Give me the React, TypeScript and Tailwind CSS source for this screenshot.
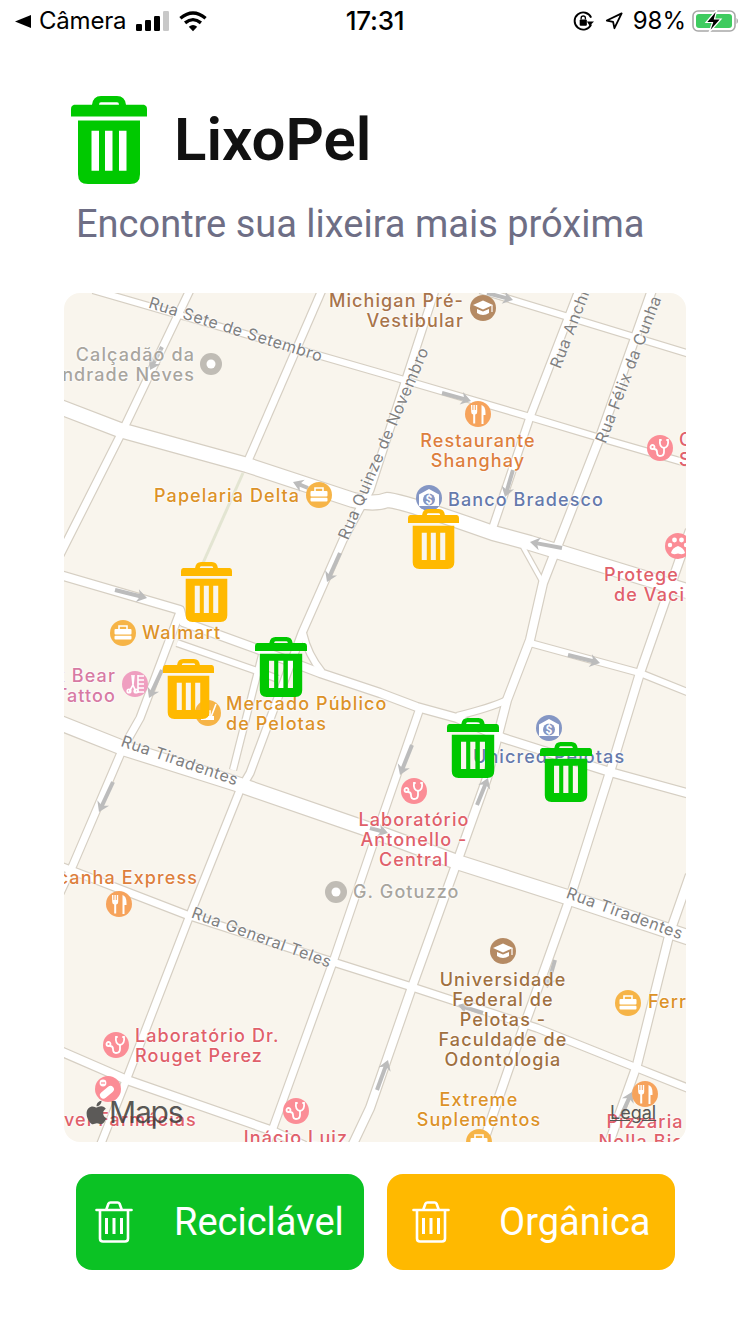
import React from "react";
import { FaApple } from "react-icons/fa";

const ROADS: { d: string; w: number }[] = [
  { d: "M93 290 L380 373 L530 417 L600 438 L690 464", w: 6 },
  { d: "M480 290 L690 354", w: 6 },
  { d: "M60 575 L180 610 L183 622 L260 650 L320 673 L380 693 L417 707 L457 718 L503 738 L610 772 L690 794", w: 8 },
  { d: "M177 643 L260 672 L278 679", w: 6 },
  { d: "M530 643 L640 673 L690 693", w: 6 },
  { d: "M60 1051 L127 1080 L270 1130 L305 1146", w: 8 },
  { d: "M60 866 L187 915 L333 962 L412 987 L537 1028 L637 1068 L690 1089", w: 7 },
  { d: "M190 290 L123 430 L60 555", w: 7 },
  { d: "M322 290 L247 463", w: 7 },
  { d: "M180 612 L140 718 L123 748 L73 865 L60 893", w: 7 },
  { d: "M435 290 L370 490 L343 540 L302 633 L250 773 L240 790 L190 915 L127 1078 L100 1146", w: 7 },
  { d: "M262 655 L233 770", w: 6 },
  { d: "M303 633 Q308 655 322 672", w: 6 },
  { d: "M579 290 L530 417 L493 527", w: 7 },
  { d: "M652 290 L600 437 L543 583 L530 640 L507 700 L487 778 L457 862 L412 987 L370 1108 L352 1146", w: 8 },
  { d: "M507 700 Q490 708 457 716", w: 6 },
  { d: "M523 547 L543 583", w: 4 },
  { d: "M690 530 L640 673 L610 772 L570 898 L540 982 L510 1065 L482 1146", w: 8 },
  { d: "M690 875 L670 932 L637 1065 L608 1146", w: 8 },
  { d: "M420 708 L383 815 L333 962 L273 1128 L266 1146", w: 7 },
  { d: "M60 407 L120 430 L247 465 L353 500 Q375 505 387 500 Q400 500 493 533 L530 543 L690 592", w: 14 },
  { d: "M60 723 L123 748 L240 785 L376 832 L457 862 L570 898 L690 938", w: 14 },
];

const ARROWS: number[][] = [
  [442, 393, 471, 401], [115, 590, 147, 598], [308, 488, 293, 482], [340, 553, 327, 582],
  [162, 347, 150, 370], [162, 670, 149, 698], [513, 470, 505, 497], [562, 548, 530, 542],
  [568, 655, 600, 663], [487, 293, 513, 300], [113, 782, 99, 812], [412, 745, 400, 775],
  [477, 805, 488, 778], [370, 828, 388, 833], [483, 1013, 458, 1005], [555, 960, 547, 988],
  [377, 1090, 388, 1060], [620, 1118, 632, 1092],
];

function Arrow({ a }: { a: number[] }) {
  const [x1, y1, x2, y2] = a;
  const ang = (Math.atan2(y2 - y1, x2 - x1) * 180) / Math.PI;
  const len = Math.hypot(x2 - x1, y2 - y1);
  return (
    <g transform={`translate(${x1} ${y1}) rotate(${ang})`} fill="#bcbcbc">
      <rect x={0} y={-2} width={len - 6} height={4} />
      <path d={`M${len} 0 L${len - 10} -6.5 L${len - 7} 0 L${len - 10} 6.5 Z`} />
    </g>
  );
}

function Glyph({ kind }: { kind: string }) {
  if (kind === "bag")
    return (
      <g fill="#fff">
        <path d="M-4 -4 V-7 H4 V-4" fill="none" stroke="#fff" strokeWidth="1.6" />
        <rect x="-8.5" y="-4" width="17" height="5.5" rx="1" />
        <rect x="-8.5" y="2.8" width="17" height="3.8" rx="1" />
      </g>
    );
  if (kind === "cart")
    return (
      <g fill="none" stroke="#fff" strokeWidth="1.6">
        <path d="M8 -9 L3 4" />
        <path d="M-7 3 H6 V7 H-7 Z" fill="#fff" stroke="none" />
        <path d="M-2 3 V-2 H2 V3" />
      </g>
    );
  if (kind === "fork")
    return (
      <g fill="#fff">
        <path d="M-7 -9 h1.4 v5 h1 v-5 h1.4 v5 h1 v-5 h1.4 v7 q0 2 -2 2.6 v9 h-2 v-9 q-2 -.6 -2 -2.6 Z" />
        <path d="M3.5 -9 q4 1 4 8 v2 h-2 v9 h-2 Z" />
      </g>
    );
  if (kind === "cap")
    return (
      <g fill="#fff">
        <path d="M-10 -3 L0 -7.5 L10 -3 L0 1.5 Z" />
        <path d="M-6 1 V5 Q0 9 6 5 V1 L0 3.6 Z" />
        <rect x="8.4" y="-3" width="1.2" height="7" />
      </g>
    );
  if (kind === "bank")
    return (
      <g>
        <path d="M0 -9 L10 -3.5 V8 H-10 V-3.5 Z" fill="#fff" />
        <circle r="6" cy="1.5" fill="#8496c4" />
        <text y="6" textAnchor="middle" fontSize="12" fontWeight="700" fill="#fff" fontFamily="Roboto, sans-serif">$</text>
      </g>
    );
  if (kind === "steth")
    return (
      <g fill="none" stroke="#fff" strokeWidth="1.8" strokeLinecap="round">
        <path d="M2 -8 L1 -8 Q0 -1 5 0 Q10 -1 9 -8 L8 -8" transform="translate(-1 0)" />
        <path d="M4 0 V4 Q4 8 0 8 Q-3 8 -3 4 Q-3 1 -6 1" />
        <circle cx="-7.5" cy="-1" r="2" />
      </g>
    );
  if (kind === "paw")
    return (
      <g fill="#fff">
        <path d="M0 0 Q6 2 7 7 Q5 9 0 7.5 Q-5 9 -7 7 Q-6 2 0 0 Z" />
        <circle cx="-8" cy="-1" r="2.2" />
        <circle cx="-3.5" cy="-6" r="2.4" />
        <circle cx="3.5" cy="-6" r="2.4" />
        <circle cx="8" cy="-1" r="2.2" />
      </g>
    );
  if (kind === "comb")
    return (
      <g fill="none" stroke="#fff" strokeWidth="1.6">
        <path d="M3 -9 V9 M3 -8 H9 M3 -4 H9 M3 0 H9 M3 4 H9 M3 8 H9" />
        <path d="M-1 -9 L-2 1 L-6 8 M-3 -9 L-2 1 L1 8" />
        <circle cx="-6" cy="7" r="1.8" />
        <circle cx="1" cy="7" r="1.8" />
      </g>
    );
  if (kind === "pill")
    return (
      <g fill="#fff">
        <rect x="-9" y="-1" width="16" height="7" rx="3.5" transform="rotate(-40 0 3)" />
        <circle cx="-5" cy="-6" r="3.4" />
        <rect x="-7" y="-6.6" width="4" height="1.2" fill="#fb8d96" />
      </g>
    );
  return null;
}

const POIS: [number, number, string, string][] = [
  [483, 308, "#b58a63", "cap"], [478, 414, "#f6a35c", "fork"], [319, 495, "#f6b447", "bag"],
  [429, 498, "#8496c4", "bank"], [660, 448, "#fb8d96", "steth"], [678, 546, "#fb8d96", "paw"],
  [123, 633, "#f6b447", "bag"], [135, 684, "#ef9fc0", "comb"], [208, 713, "#f6b447", "cart"],
  [549, 728, "#8496c4", "bank"], [414, 791, "#fb8d96", "steth"], [119, 904, "#f6a35c", "fork"],
  [503, 951, "#b58a63", "cap"], [628, 1003, "#f6b447", "bag"], [116, 1045, "#fb8d96", "steth"],
  [108, 1089, "#fb8d96", "pill"], [296, 1111, "#fb8d96", "steth"], [645, 1094, "#f6a35c", "fork"],
  [479, 1142, "#f6b447", "bag"],
];

function MapDrawing() {
  return (
    <svg viewBox="64 293 622 849" className="absolute inset-0 w-full h-full">
      {ROADS.map((r, i) => (
        <path key={i} d={r.d} fill="none" stroke="#d6cfc3" strokeWidth={r.w + 2.4} strokeLinejoin="round" />
      ))}
      <path d="M243 473 L203 563" fill="none" stroke="#e3e5d2" strokeWidth="3" />
      {ROADS.map((r, i) => (
        <path key={i} d={r.d} fill="none" stroke="#ffffff" strokeWidth={r.w} strokeLinejoin="round" />
      ))}
      {ARROWS.map((a, i) => (
        <Arrow key={i} a={a} />
      ))}
      {[[211, 364], [336, 892]].map(([x, y]) => (
        <g key={x}>
          <circle cx={x} cy={y} r={11} fill="#c0bcb5" />
          <circle cx={x} cy={y} r={4.5} fill="#ffffff" />
        </g>
      ))}
      {POIS.map(([x, y, c, k], i) => (
        <g key={i} transform={`translate(${x} ${y})`}>
          <circle r={13} fill={c} />
          <Glyph kind={k} />
        </g>
      ))}
    </svg>
  );
}

function TrashSolid({ className }: { className: string }) {
  return (
    <svg viewBox="0 0 152 180" preserveAspectRatio="none" className={className} fill="currentColor">
      <path
        fillRule="evenodd"
        d="M60 0 H92 Q108 0 110 18 H146 Q152 20 152 27 V42 H0 V27 Q0 20 6 18 H42 Q44 0 60 0 Z M60 13 Q56 13 56 18 H96 Q96 13 92 13 Z"
      />
      <path
        fillRule="evenodd"
        d="M14 50 H138 V160 Q138 180 118 180 H34 Q14 180 14 160 Z M41 71 V153 H56 V71 Z M68 71 V153 H83 V71 Z M96 71 V153 H111 V71 Z"
      />
    </svg>
  );
}

function TrashOutline() {
  return (
    <svg viewBox="0 0 38 42" className="w-[38px] h-[42px] shrink-0" fill="none" stroke="#fff" strokeWidth="2.6" strokeLinecap="round" strokeLinejoin="round">
      <path d="M1.5 9 H36.5" />
      <path d="M11.5 8 L13.5 2.5 Q14 1.5 15.5 1.5 H22.5 Q24 1.5 24.5 2.5 L26.5 8" />
      <path d="M5 9.5 V37.5 Q5 40.5 8 40.5 H30 Q33 40.5 33 37.5 V9.5" />
      <path d="M11.5 17 V33 M19 17 V33 M26.5 17 V33" strokeWidth="3" strokeLinecap="butt" />
    </svg>
  );
}

const HALO = "[text-shadow:0_0_2px_#fff,0_0_2px_#fff,0_0_3px_#fff]";

function Label({ className, children }: { className: string; children: React.ReactNode }) {
  return (
    <div className={`absolute whitespace-nowrap text-[18px] leading-[20px] font-medium tracking-[1.1px] ${HALO} ${className}`}>
      {children}
    </div>
  );
}

function Street({ className, children }: { className: string; children: React.ReactNode }) {
  return (
    <div className={`absolute whitespace-nowrap text-[16px] leading-[18px] tracking-[0.65px] text-[#808080] -translate-x-1/2 -translate-y-1/2 ${HALO} ${className}`}>
      {children}
    </div>
  );
}

function StatusBar() {
  return (
    <div className="h-[42px] grid grid-cols-[1fr_auto_1fr] items-center text-[24px] leading-[30px] text-black font-['Inter',sans-serif]">
      <div className="flex items-center pl-[15px]">
        <svg viewBox="0 0 16 13" className="w-[16px] h-[13px]"><path d="M16 0 V13 L0 6.5 Z" fill="#000" /></svg>
        <span className="ml-[8px] tracking-[-0.2px]">Câmera</span>
        <svg viewBox="0 0 33 20" className="ml-[10px] w-[33px] h-[20px]">
          <rect x="0" y="13" width="6" height="7" rx="1.2" fill="#000" />
          <rect x="9" y="9" width="6" height="11" rx="1.2" fill="#000" />
          <rect x="18" y="5" width="6" height="15" rx="1.2" fill="#000" />
          <rect x="27" y="0" width="6" height="20" rx="1.2" fill="#c8c8c8" />
        </svg>
        <svg viewBox="0 0 30 22" className="ml-[10px] w-[28px] h-[21px]" fill="none" stroke="#000" strokeWidth="3.6">
          <path d="M1.5 7.5 Q15 -3.5 28.5 7.5" />
          <path d="M6.5 12.5 Q15 5.5 23.5 12.5" />
          <path d="M15 21.5 L10.5 16.5 Q15 13 19.5 16.5 Z" fill="#000" stroke="none" />
        </svg>
      </div>
      <div className="font-medium text-[26px] text-center tracking-[-0.2px]">17:31</div>
      <div className="flex items-center justify-end pr-[12px]">
        <svg viewBox="0 0 22 24" className="w-[21px] h-[23px]" fill="none" stroke="#000" strokeWidth="2">
          <path d="M19 15 A9 9 0 1 1 19 8" />
          <path d="M22 12 L17.5 16.5 L14.5 12 Z" fill="#000" stroke="none" />
          <rect x="7" y="10" width="7.5" height="6.5" rx="1" fill="#000" stroke="none" />
          <path d="M8.5 10 V8.5 A2.2 2.2 0 0 1 13 8.5 V10" strokeWidth="1.4" />
        </svg>
        <svg viewBox="0 0 20 20" className="ml-[11px] w-[18px] h-[18px]" fill="none" stroke="#000" strokeWidth="2" strokeLinejoin="round">
          <path d="M18.5 1.5 L10.5 18 L9 11 L2 9.5 Z" />
        </svg>
        <span className="ml-[10px]">98%</span>
        <svg viewBox="0 0 46 24" className="ml-[6px] w-[46px] h-[24px]">
          <rect x="1" y="2" width="42" height="20" rx="5" fill="none" stroke="#a8a8a8" strokeWidth="1.6" />
          <rect x="4" y="5" width="36" height="14" rx="3" fill="#3ecb5f" />
          <path d="M44.5 9 Q46 10 46 12 Q46 14 44.5 15 Z" fill="#a8a8a8" />
          <path d="M25 0.5 L14 13.5 H20.5 L17 23.5 L29 10 H22.5 Z" fill="#000" stroke="#fff" strokeWidth="1.2" />
        </svg>
      </div>
    </div>
  );
}

function Map() {
  return (
    <div className="relative ml-[64px] w-[622px] h-[849px] rounded-[16px] overflow-hidden bg-[#f9f5ed] font-['Inter',sans-serif]">
      <MapDrawing />

      <Street className="left-[172px] top-[36px] rotate-[17.5deg]">Rua Sete de Setembro</Street>
      <Street className="left-[319px] top-[150px] rotate-[-67deg]">Rua Quinze de Novembro</Street>
      <Street className="left-[510px] top-[24px] rotate-[-69deg]">Rua Anchieta</Street>
      <Street className="left-[564px] top-[76px] rotate-[-69deg]">Rua Félix da Cunha</Street>
      <Street className="left-[116px] top-[467px] rotate-[19deg]">Rua Tiradentes</Street>
      <Street className="left-[561px] top-[620px] rotate-[20deg]">Rua Tiradentes</Street>
      <Street className="left-[198px] top-[644px] rotate-[20deg]">Rua General Teles</Street>

      <Label className="right-[222px] top-[-2px] text-right text-[#a8744a]">Michigan Pré-<br />Vestibular</Label>
      <Label className="right-[491px] top-[52px] text-right text-[#a8a59e]">Calçadão da<br />Andrade Neves</Label>
      <Label className="left-[414px] top-[138px] -translate-x-1/2 text-center text-[#dd7f3d]">Restaurante<br />Shanghay</Label>
      <Label className="left-[384px] top-[197px] text-[#6579ab]">Banco Bradesco</Label>
      <Label className="left-[90px] top-[193px] text-[#dc9228]">Papelaria Delta</Label>
      <Label className="left-[78px] top-[330px] text-[#dc9228]">Walmart</Label>
      <Label className="right-[570px] top-[373px] text-right text-[#d77aa3]">k Bear<br />Tattoo</Label>
      <Label className="left-[162px] top-[401px] text-[#dc9228]">Mercado Público<br />de Pelotas</Label>
      <Label className="left-[409px] top-[454px] text-[#6579ab]">Unicred Pelotas</Label>
      <Label className="left-[540px] top-[272px] text-[#e0606a]">Protege</Label>
      <Label className="left-[550px] top-[292px] text-[#e0606a]">de Vacina</Label>
      <Label className="left-[615px] top-[137px] text-[#e0606a]">C<br />S</Label>
      <Label className="left-[350px] top-[517px] -translate-x-1/2 text-center text-[#e0606a]">Laboratório<br />Antonello -<br />Central</Label>
      <Label className="left-[289px] top-[589px] text-[#a8a59e]">G. Gotuzzo</Label>
      <Label className="right-[488px] top-[575px] text-[#dd7f3d]">Picanha Express</Label>
      <Label className="left-[439px] top-[677px] -translate-x-1/2 text-center text-[#a0703f]">Universidade<br />Federal de<br />Pelotas -<br />Faculdade de<br />Odontologia</Label>
      <Label className="left-[584px] top-[699px] text-[#dc9228]">Ferragem</Label>
      <Label className="left-[71px] top-[733px] text-[#e0606a]">Laboratório Dr.<br />Rouget Perez</Label>
      <Label className="left-[0px] top-[817px] text-[#e0606a]">vel Farmácias</Label>
      <Label className="left-[232px] top-[835px] -translate-x-1/2 text-[#e0606a]">Inácio Luiz</Label>
      <Label className="left-[415px] top-[797px] -translate-x-1/2 text-center text-[#dc9228]">Extreme<br />Suplementos</Label>
      <Label className="left-[581px] top-[819px] -translate-x-1/2 text-center text-[#e0606a]">Pizzaria<br />Nolla Biot</Label>

      <TrashSolid className="absolute left-[117px] top-[269px] w-[51px] h-[60px] text-[#ffb900]" />
      <TrashSolid className="absolute left-[191px] top-[344px] w-[52px] h-[60px] text-[#00c800]" />
      <TrashSolid className="absolute left-[99px] top-[366px] w-[51px] h-[60px] text-[#ffb900]" />
      <TrashSolid className="absolute left-[344px] top-[216px] w-[51px] h-[60px] text-[#ffb900]" />
      <TrashSolid className="absolute left-[383px] top-[425px] w-[52px] h-[60px] text-[#00c800]" />
      <TrashSolid className="absolute left-[476px] top-[449px] w-[52px] h-[60px] text-[#00c800]" />

      <div className="absolute left-[20px] top-[802px] flex items-center text-[#3c3a38]/85">
        <FaApple className="w-[25px] h-[27px] text-[#5c5a58]" />
        <span className="text-[30px] leading-[34px] tracking-[-1.2px]">Maps</span>
      </div>
      <div className="absolute left-[546px] top-[810px] text-[18px] leading-[20px] text-[#555] underline">Legal</div>
    </div>
  );
}

function CategoryButton({ className, labelClass, label }: { className: string; labelClass: string; label: string }) {
  return (
    <div className={`w-[288px] h-[96px] rounded-[16px] flex items-center ${className}`}>
      <TrashOutline />
      <span className={`text-[38px] leading-[44px] text-white ${labelClass}`}>{label}</span>
    </div>
  );
}

export default function App() {
  return (
    <div className="w-[750px] h-[1334px] bg-white overflow-hidden font-['Roboto',sans-serif]">
      <StatusBar />
      <div className="pt-[54px] pl-[71px] flex items-center">
        <TrashSolid className="w-[76px] h-[88px] text-[#00c900]" />
        <h1 className="ml-[27px] text-[60px] leading-[70px] font-semibold text-[#111] font-['Roboto',sans-serif]">LixoPel</h1>
      </div>
      <p className="mt-[19px] ml-[76px] text-[38px] leading-[42px] text-[#6e6e85]">Encontre sua lixeira mais próxima</p>
      <div className="mt-[48px]">
        <Map />
      </div>
      <div className="mt-[32px] ml-[76px] flex gap-[23px]">
        <CategoryButton className="bg-[#0bc224] pl-[19px]" labelClass="ml-[41px]" label="Reciclável" />
        <CategoryButton className="bg-[#ffb900] pl-[25px]" labelClass="ml-[49px]" label="Orgânica" />
      </div>
    </div>
  );
}
